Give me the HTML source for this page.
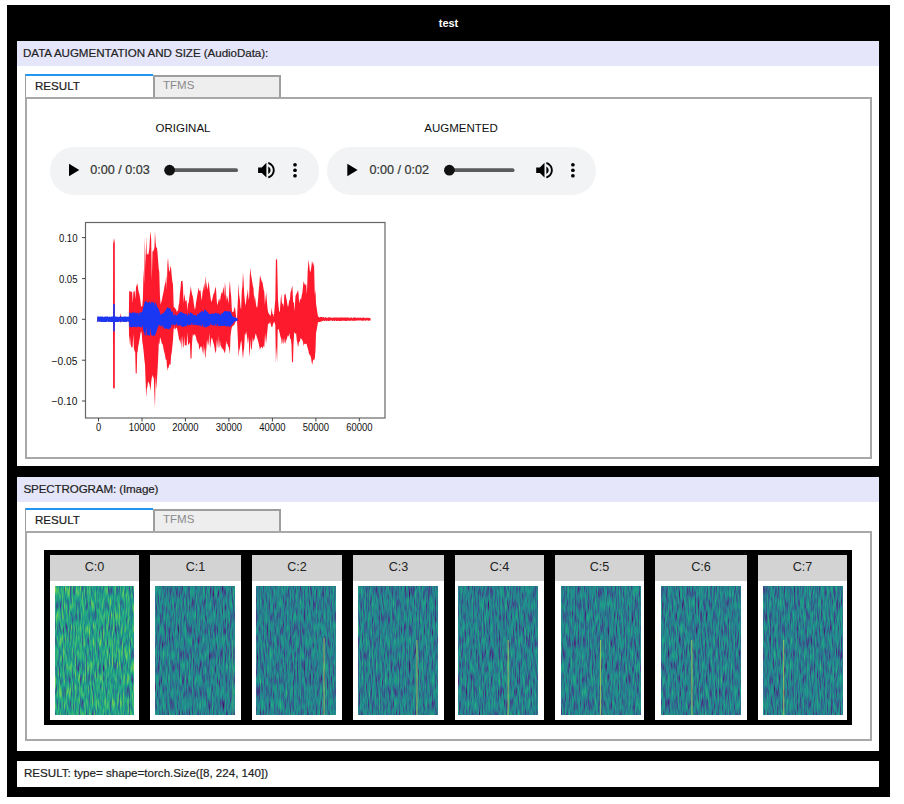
<!DOCTYPE html>
<html><head><meta charset="utf-8">
<style>
html,body{margin:0;padding:0;background:#fff;width:904px;height:804px;overflow:hidden;font-family:"Liberation Sans",sans-serif;}
.a{position:absolute;box-sizing:border-box;}
.hdr,.tab1,.sec,.time{-webkit-text-stroke:0.2px currentColor;}
#outer{left:7px;top:5px;width:883px;height:792px;background:#000;}
#title{left:7px;top:5px;width:883px;height:36px;color:#fff;font-weight:bold;font-size:11px;text-align:center;line-height:37px;}
.sec{background:#fff;left:17px;width:862px;}
.hdr{background:#e6e6fa;left:17px;width:862px;height:25px;font-size:11.6px;letter-spacing:-0.05px;color:#222;line-height:23px;padding-left:6px;}
.tab1{left:25px;width:128px;height:23px;border-top:2px solid #2196f3;border-left:1.5px solid #9e9e9e;background:#fff;font-size:11.6px;color:#1a1a1a;padding-left:9px;line-height:19px;}
.tab2{left:153px;width:128px;height:22px;border:2px solid #9e9e9e;border-bottom:none;background:#eee;font-size:11.5px;color:#8a8a8a;padding-left:8px;line-height:16px;}
.panel{left:25px;width:847px;border:2px solid #a8a8a8;background:#fff;}
.lbl{font-size:11.5px;color:#111;text-align:center;width:268px;}
.pill{height:48px;width:269px;border-radius:24px;background:#f1f3f4;}
.time{font-size:12.6px;color:#333;line-height:15px;}
.cell{background:#fff;}
.chdr{top:555px;height:26px;background:#d3d3d3;font-size:12.6px;color:#222;text-align:center;line-height:25px;}
</style></head><body>
<div class="a" id="outer"></div>
<div class="a" id="title">test</div>

<!-- section 1 -->
<div class="a sec" style="top:41px;height:425px;"></div>
<div class="a hdr" style="top:41px;">DATA AUGMENTATION AND SIZE (AudioData):</div>
<div class="a panel" style="top:97px;height:362px;"></div>
<div class="a tab2" style="top:75px;">TFMS</div>
<div class="a tab1" style="top:74px;">RESULT</div>

<div class="a lbl" style="left:49px;top:122px;">ORIGINAL</div>
<div class="a lbl" style="left:327px;top:122px;">AUGMENTED</div>

<div class="a pill" style="left:50.0px;top:147px;"></div>
<svg class="a" style="left:50.0px;top:147px" width="269" height="48">
<path d="M19.0,16.8 L29.3,23 L19.0,29.2Z" fill="#000"/>
<rect x="119.6" y="21.3" width="68.4" height="3.7" rx="1.85" fill="#5b5b5b"/>
<circle cx="119.6" cy="23.2" r="5.4" fill="#111"/>
<g transform="translate(205.33,12.12) scale(0.922)"><path fill="#000" d="M3 9v6h4l5 5V4L7 9H3zm13.5 3c0-1.770-1.02-3.29-2.5-4.03v8.05c1.48-.73 2.5-2.25 2.5-4.02zM14 3.23v2.06c2.890.86 5 3.54 5 6.71s-2.11 5.85-5 6.71v2.06c4.01-.91 7-4.49 7-8.77s-2.99-7.86-7-8.77z"/></g>
<circle cx="245.00" cy="17.75" r="1.85" fill="#000"/>
<circle cx="245.00" cy="23.25" r="1.85" fill="#000"/>
<circle cx="245.00" cy="28.75" r="1.85" fill="#000"/>
</svg>
<div class="a time" style="left:90.3px;top:163px;">0:00 / 0:03</div>
<div class="a pill" style="left:327.3px;top:147px;"></div>
<svg class="a" style="left:327.3px;top:147px" width="269" height="48">
<path d="M20.3,16.8 L30.6,23 L20.3,29.2Z" fill="#000"/>
<rect x="122.4" y="21.3" width="65.1" height="3.7" rx="1.85" fill="#5b5b5b"/>
<circle cx="122.4" cy="23.2" r="5.4" fill="#111"/>
<g transform="translate(206.43,12.12) scale(0.922)"><path fill="#000" d="M3 9v6h4l5 5V4L7 9H3zm13.5 3c0-1.770-1.02-3.29-2.5-4.03v8.05c1.48-.73 2.5-2.25 2.5-4.02zM14 3.23v2.06c2.890.86 5 3.54 5 6.71s-2.11 5.85-5 6.71v2.06c4.01-.91 7-4.49 7-8.77s-2.99-7.86-7-8.77z"/></g>
<circle cx="245.90" cy="17.75" r="1.85" fill="#000"/>
<circle cx="245.90" cy="23.25" r="1.85" fill="#000"/>
<circle cx="245.90" cy="28.75" r="1.85" fill="#000"/>
</svg>
<div class="a time" style="left:369.5px;top:163px;">0:00 / 0:02</div>

<svg class="a" style="left:0;top:0" width="400" height="440">
<path d="M97.2,317.0 97.8,317.2 98.4,317.2 99.0,317.1 99.6,317.7 100.2,317.8 100.8,318.2 101.5,317.0 102.1,318.0 102.7,317.0 103.3,317.1 103.9,317.2 104.5,317.1 105.1,318.1 105.7,317.0 106.3,317.7 106.9,317.1 107.5,317.2 108.1,318.1 108.7,317.1 109.4,317.1 110.0,317.1 110.6,317.1 111.2,317.1 111.8,317.0 112.4,317.1 113.0,317.0 113.1,238.0 113.9,243.7 114.8,238.0 114.9,317.0 115.5,317.0 116.2,317.8 116.8,317.6 117.5,317.1 118.1,317.1 118.7,317.1 119.4,317.1 120.0,317.0 120.5,312.8 121.0,317.0 121.6,317.0 122.2,317.1 122.8,317.5 123.4,317.0 124.0,317.1 124.6,317.1 125.2,317.8 125.8,318.1 126.4,317.5 127.0,318.0 127.6,317.0 128.2,317.8 128.8,317.0 129.2,291.0 129.8,291.3 130.4,291.3 131.0,292.3 131.6,291.3 132.2,292.9 132.8,303.6 133.4,292.2 134.0,291.0 134.7,291.2 135.3,299.2 136.0,287.3 136.6,285.5 137.3,283.0 137.9,287.3 138.6,291.8 139.2,293.3 139.8,296.5 140.4,300.4 141.1,307.1 141.7,306.0 142.3,306.3 142.9,298.0 143.6,269.0 144.2,284.0 144.8,237.5 145.5,268.9 146.2,236.8 146.8,254.8 147.5,253.7 148.1,254.9 148.7,252.6 149.3,248.4 150.0,237.2 150.6,231.2 151.2,239.8 151.8,280.7 152.5,250.9 153.1,251.8 153.7,249.9 154.4,248.0 155.0,231.2 155.6,242.2 156.2,247.8 156.9,247.2 157.5,252.4 158.1,260.5 158.7,268.4 159.3,272.3 159.9,294.7 160.6,304.7 161.2,302.3 161.8,300.5 162.5,296.5 163.1,294.1 163.7,291.0 164.3,287.6 164.9,284.3 165.6,282.0 166.2,274.8 166.8,290.3 167.4,264.6 168.0,257.4 168.7,267.3 169.3,272.3 170.1,268.9 170.9,265.5 171.6,274.3 172.3,280.9 173.0,284.8 173.7,306.7 174.3,307.2 174.9,307.9 175.5,308.9 176.2,309.3 176.8,312.2 177.4,310.5 178.0,311.0 178.6,305.6 179.2,303.0 179.9,293.4 180.5,288.6 181.1,281.0 181.8,280.9 182.4,280.4 183.0,286.9 183.6,303.5 184.2,293.4 184.8,297.2 185.4,302.0 186.1,299.8 186.7,301.0 187.3,311.1 188.0,302.9 188.6,303.5 189.3,297.8 190.1,292.1 190.8,286.0 191.5,291.6 192.3,294.9 193.0,297.2 193.6,302.0 194.2,306.2 194.8,309.7 195.4,307.8 196.0,303.0 196.7,298.7 197.3,294.9 197.9,292.1 198.5,287.3 199.1,290.6 199.8,290.9 200.4,289.8 201.1,296.1 201.8,300.8 202.5,292.2 203.1,289.9 203.7,286.8 204.4,282.8 205.0,290.8 205.6,275.4 206.2,282.5 206.9,286.4 207.5,289.8 208.7,281.0 209.3,286.9 209.9,292.8 210.6,297.8 211.2,302.2 211.8,300.4 212.5,298.5 213.1,295.6 213.7,293.5 214.3,292.7 215.0,289.0 215.6,286.6 216.2,291.3 216.8,301.5 217.5,305.4 218.1,302.6 218.7,299.7 219.3,298.4 219.9,301.8 220.6,296.9 221.2,293.8 221.8,292.2 222.4,293.7 223.0,289.5 223.7,286.7 224.3,296.7 224.9,282.3 225.5,287.6 226.1,301.5 226.8,294.8 227.4,297.3 228.0,299.7 228.6,303.7 229.3,288.1 229.9,280.4 230.6,291.7 231.2,296.4 231.9,310.7 232.6,312.2 233.4,312.1 234.1,309.2 234.9,306.6 235.6,312.3 236.3,318.0 237.0,318.0 237.8,301.9 238.6,283.5 239.2,295.2 239.9,299.8 240.5,307.2 241.1,309.4 241.8,291.1 242.4,285.9 243.0,272.3 243.6,281.3 244.2,294.1 244.9,301.1 245.5,306.0 246.1,302.2 246.7,296.6 247.3,293.7 247.9,289.0 248.6,299.9 249.2,296.7 249.8,275.3 250.4,268.0 251.0,274.5 251.7,278.5 252.3,282.6 252.9,286.1 253.5,288.2 254.2,300.4 254.8,294.7 255.7,302.3 256.5,307.2 257.3,307.2 258.0,300.2 258.6,291.7 259.3,284.8 260.0,275.4 260.6,277.2 261.2,279.4 261.9,281.7 262.5,282.3 263.7,289.8 264.3,291.9 264.9,304.9 265.6,297.6 266.2,292.2 266.8,300.2 267.5,307.9 268.1,312.2 268.7,313.3 269.4,314.4 270.0,315.2 270.6,315.9 271.8,307.8 272.4,313.9 273.1,314.1 273.7,317.2 274.5,309.0 275.3,300.0 275.9,259.2 276.5,259.4 277.1,259.2 278.0,299.7 278.6,306.6 279.3,312.2 279.9,311.0 280.6,300.5 281.2,293.5 281.8,301.8 282.4,304.6 283.0,303.1 283.7,307.4 284.3,295.1 284.9,294.5 285.5,293.5 286.1,297.5 286.8,300.5 287.4,304.6 288.0,307.2 288.6,304.5 289.2,300.3 289.9,300.0 290.5,292.2 291.1,290.8 291.8,288.1 292.4,285.4 293.1,301.9 293.9,302.6 294.6,310.9 295.5,296.0 296.1,294.8 296.8,293.1 297.4,292.0 298.0,289.8 298.6,293.9 299.2,303.7 299.9,299.8 300.5,298.4 301.1,299.7 301.7,295.6 302.4,292.7 303.0,286.4 303.6,281.0 304.2,283.0 304.9,285.0 305.5,285.1 306.1,283.5 306.9,294.4 307.7,271.0 308.5,259.9 309.1,264.1 309.8,270.7 310.4,272.3 311.2,268.0 312.0,261.1 312.7,263.2 313.3,266.0 314.0,262.0 314.8,294.9 315.5,290.0 316.0,303.6 317.0,310.0 318.0,316.5 318.6,316.7 319.2,316.9 319.8,317.8 320.4,316.8 321.0,317.0 321.6,317.0 322.2,317.2 322.8,317.2 323.4,317.1 324.0,317.2 324.6,317.9 325.2,317.2 325.8,317.3 326.4,317.5 327.0,317.8 327.6,317.9 328.2,317.4 328.8,317.3 329.4,317.3 330.1,317.3 330.7,317.4 331.3,317.9 331.9,317.4 332.5,318.1 333.1,317.3 333.7,317.7 334.3,317.5 334.9,317.4 335.5,317.4 336.1,317.4 336.7,317.4 337.3,317.4 337.9,317.5 338.5,317.7 339.1,317.4 339.7,317.5 340.3,317.5 340.9,317.4 341.6,317.4 342.2,317.4 342.8,317.5 343.4,317.6 344.0,317.5 344.6,317.5 345.2,317.6 345.8,317.6 346.4,317.5 347.0,317.5 347.6,317.6 348.2,317.6 348.8,317.6 349.4,318.3 350.0,317.7 350.6,317.6 351.2,317.5 351.8,317.6 352.4,318.4 353.0,317.6 353.7,317.6 354.3,317.5 354.9,317.6 355.5,317.6 356.1,317.6 356.7,318.3 357.3,317.7 357.9,317.6 358.5,317.7 359.1,317.7 359.7,317.7 360.3,317.6 360.9,317.7 361.5,318.0 362.1,317.7 362.7,317.8 363.3,317.6 363.9,317.6 364.5,317.7 365.2,318.4 365.8,317.7 366.4,317.7 367.0,317.7 367.6,317.7 368.2,318.0 368.8,317.7 369.4,317.8 370.0,318.4 370.6,317.7 370.6,320.7 370.0,320.3 369.4,320.7 368.8,320.7 368.2,320.7 367.6,320.6 367.0,320.1 366.4,320.4 365.8,320.7 365.2,320.7 364.5,320.2 363.9,320.6 363.3,320.7 362.7,320.7 362.1,320.7 361.5,320.7 360.9,320.1 360.3,320.8 359.7,320.2 359.1,320.7 358.5,320.3 357.9,320.8 357.3,320.3 356.7,320.8 356.1,320.6 355.5,320.8 354.9,320.8 354.3,320.8 353.7,320.8 353.0,320.9 352.4,320.8 351.8,320.2 351.2,320.8 350.6,320.8 350.0,320.8 349.4,320.8 348.8,320.9 348.2,320.6 347.6,320.5 347.0,320.9 346.4,320.9 345.8,321.0 345.2,321.0 344.6,320.4 344.0,321.0 343.4,320.4 342.8,321.0 342.2,320.2 341.6,320.9 340.9,320.9 340.3,320.9 339.7,321.0 339.1,321.0 338.5,320.4 337.9,321.0 337.3,321.0 336.7,321.0 336.1,321.0 335.5,320.3 334.9,321.0 334.3,321.0 333.7,320.2 333.1,321.0 332.5,321.1 331.9,321.1 331.3,320.1 330.7,320.3 330.1,321.1 329.4,320.8 328.8,321.1 328.2,321.1 327.6,320.6 327.0,321.1 326.4,321.1 325.8,320.2 325.2,321.1 324.6,320.9 324.0,321.2 323.4,320.2 322.8,321.1 322.2,320.9 321.6,321.5 321.0,321.6 320.4,321.8 319.8,321.9 319.2,322.0 318.6,322.0 318.0,322.2 317.0,328.0 316.0,333.4 315.5,350.0 314.8,358.6 314.2,359.8 313.6,359.4 312.9,360.9 312.3,364.8 311.7,362.6 311.1,358.3 310.4,355.7 309.8,354.5 309.2,354.8 308.6,351.6 308.0,349.1 307.3,346.8 306.7,344.3 306.1,343.6 305.5,343.9 304.9,344.3 304.2,343.5 303.6,346.1 303.0,341.9 302.3,340.2 301.7,338.7 301.1,339.3 300.5,337.8 299.9,342.5 299.2,340.7 298.6,344.5 298.0,347.4 297.4,342.7 296.8,340.8 296.1,333.1 295.5,334.3 294.9,332.4 294.2,332.8 293.5,345.0 293.0,362.3 292.0,362.3 291.5,345.0 290.8,338.3 290.1,339.6 289.4,332.8 288.7,336.8 288.0,334.9 287.4,336.9 286.8,338.7 286.1,340.8 285.5,344.3 284.9,337.8 284.3,342.8 283.6,343.9 283.0,337.7 282.4,342.6 281.8,344.3 281.2,338.4 280.6,337.3 279.9,333.9 279.3,331.4 278.7,328.7 277.7,330.0 277.1,363.6 276.5,346.4 275.9,363.6 275.3,325.0 274.5,322.0 273.7,322.5 273.0,324.3 272.3,327.0 271.5,327.0 270.6,323.7 270.0,321.8 269.3,323.8 268.6,323.7 268.0,324.0 267.0,335.0 266.0,344.0 265.1,333.0 264.3,347.4 263.7,345.5 263.1,347.3 262.5,348.4 261.8,347.1 261.2,346.9 260.6,347.6 260.0,349.9 259.4,346.9 258.8,344.0 258.1,341.0 257.5,338.9 256.9,337.4 256.0,333.7 255.4,334.3 254.8,338.2 254.1,340.0 253.5,341.9 252.9,337.3 252.3,342.2 251.7,350.0 251.0,348.3 250.4,338.3 249.8,357.3 249.2,351.1 248.6,336.0 247.9,344.1 247.3,338.5 246.7,334.6 246.1,331.2 245.5,335.6 244.9,333.3 244.2,347.8 243.6,351.3 243.0,359.2 242.4,352.7 241.7,343.4 241.1,339.9 240.5,343.9 239.8,348.6 239.2,350.6 238.6,357.3 237.8,337.9 237.0,320.5 236.1,320.5 235.5,321.8 234.8,323.4 234.2,325.0 233.4,325.4 232.6,326.1 231.8,327.5 231.2,330.5 230.5,336.3 229.9,354.8 229.3,349.7 228.7,347.2 228.0,345.9 227.4,343.6 226.8,344.5 226.2,340.6 225.5,349.7 224.9,353.6 224.3,351.7 223.7,350.5 223.0,348.9 222.4,348.5 221.8,348.6 221.2,346.3 220.6,345.9 219.9,339.4 219.3,347.4 218.7,347.4 218.1,335.8 217.5,348.4 216.8,339.3 216.2,350.2 215.6,353.6 215.0,350.5 214.3,346.4 213.7,343.7 213.1,342.1 212.4,339.1 211.8,337.4 211.2,339.5 210.6,344.8 210.0,348.6 209.3,332.6 208.7,342.4 208.1,345.6 207.5,339.1 206.8,351.9 206.2,340.1 205.6,358.6 205.0,356.1 204.4,346.5 203.7,355.3 203.1,343.9 202.5,353.6 201.8,347.8 201.0,346.1 200.4,347.1 199.8,348.2 199.2,349.9 198.6,343.5 197.9,343.6 197.3,341.4 196.7,340.6 196.1,337.4 195.4,335.4 194.8,333.7 194.2,335.2 193.6,335.8 192.9,333.8 192.3,339.9 192.0,344.0 191.5,358.6 190.5,358.6 190.0,344.0 189.3,342.6 188.6,344.9 188.0,344.3 187.3,332.3 186.7,344.8 186.1,346.1 185.5,344.9 184.8,345.4 184.2,336.3 183.6,346.4 183.0,347.9 182.3,335.6 181.7,349.9 181.1,336.6 180.4,344.1 179.8,340.7 179.2,339.9 178.4,335.5 177.6,331.1 176.8,327.5 176.2,327.9 175.5,328.8 174.9,330.0 174.3,326.8 173.6,329.4 173.0,339.9 172.4,345.9 171.8,351.9 171.1,355.8 170.5,364.8 169.8,364.7 169.2,364.3 168.5,368.5 167.9,367.0 167.2,371.0 166.5,359.6 165.8,359.9 165.1,355.8 164.4,352.4 163.7,349.9 163.1,346.2 162.5,343.9 161.8,343.4 161.2,341.0 160.6,338.5 160.0,337.4 159.4,344.6 158.8,342.8 158.1,359.4 157.5,371.0 156.9,380.3 156.2,389.6 155.6,375.0 155.0,408.4 154.4,394.0 153.8,376.3 153.1,378.5 152.5,374.8 151.9,377.1 151.2,382.0 150.6,391.0 150.0,386.8 149.3,383.8 148.7,382.2 148.1,381.6 147.4,386.8 146.8,389.0 146.2,397.2 145.0,364.8 144.3,359.1 143.7,352.2 143.0,345.8 142.3,341.7 141.7,333.1 141.0,331.2 140.3,334.5 139.6,339.2 138.9,343.2 138.2,346.5 137.5,352.4 137.2,352.0 136.7,373.5 135.7,373.5 135.2,352.0 134.6,350.9 133.9,348.6 133.3,333.8 132.6,346.5 132.0,348.0 131.3,346.8 130.6,344.3 129.9,335.5 129.2,344.9 128.8,321.6 128.2,321.6 127.6,320.8 127.0,321.5 126.4,321.6 125.8,321.5 125.2,321.4 124.6,321.5 124.0,320.3 123.4,321.5 122.8,321.5 122.2,321.4 121.6,321.3 121.0,321.6 120.5,323.0 120.0,321.6 119.4,321.5 118.7,321.6 118.1,321.6 117.5,320.7 116.8,320.4 116.2,321.3 115.5,320.7 114.9,321.6 114.8,388.5 113.9,388.2 113.1,388.5 113.0,321.6 112.4,321.5 111.8,321.5 111.2,321.6 110.6,321.6 110.0,321.5 109.4,321.5 108.7,321.5 108.1,321.6 107.5,321.5 106.9,321.5 106.3,321.4 105.7,321.6 105.1,321.5 104.5,321.5 103.9,321.4 103.3,321.5 102.7,321.5 102.1,321.5 101.5,321.5 100.8,321.5 100.2,321.4 99.6,321.5 99.0,321.5 98.4,320.4 97.8,321.5 97.2,321.6Z" fill="#fd1a2c"/>
<path d="M97.2,316.5 97.8,316.6 98.4,316.6 99.0,316.6 99.6,316.7 100.3,316.5 100.9,316.6 101.5,316.6 102.1,316.6 102.7,316.6 103.3,317.5 103.9,316.6 104.5,316.7 105.2,316.6 105.8,316.6 106.4,316.5 107.0,316.6 107.6,316.6 108.2,316.5 108.8,317.4 109.4,316.5 110.0,316.6 110.7,317.3 111.3,316.6 111.9,316.6 112.5,316.6 113.1,316.5 113.2,304.0 114.0,304.1 114.8,304.0 114.9,316.5 115.5,316.6 116.1,316.6 116.7,316.8 117.4,316.7 118.0,316.6 118.6,317.5 119.2,316.6 119.8,316.7 120.4,316.6 121.0,316.6 121.6,316.5 122.3,316.7 122.9,317.1 123.5,316.6 124.1,316.6 124.7,316.5 125.3,316.6 125.9,316.5 126.5,316.7 127.2,316.7 127.8,316.6 128.4,316.7 129.0,316.5 129.5,312.2 130.1,312.6 130.8,312.7 131.4,313.8 132.0,312.6 132.6,312.5 133.2,312.4 133.9,312.6 134.5,312.3 135.1,313.5 135.8,312.3 136.4,313.4 137.0,312.8 137.6,313.1 138.2,312.6 138.9,315.6 139.5,312.3 140.1,312.7 140.8,312.3 141.4,312.3 142.0,312.2 142.6,310.1 143.2,307.8 143.8,305.7 144.4,303.6 145.0,301.0 145.6,301.4 146.2,301.2 146.9,302.2 147.5,302.4 148.1,302.6 148.8,302.5 149.4,302.0 150.0,301.5 150.6,304.4 151.2,302.0 151.9,301.6 152.5,302.3 153.1,302.8 153.8,302.0 154.4,306.5 155.0,301.6 155.6,302.9 156.3,304.1 156.9,305.9 157.5,307.6 158.2,308.2 158.8,309.1 159.7,312.0 160.6,314.7 161.2,314.4 161.9,313.9 162.5,313.6 163.1,313.1 163.8,312.8 164.4,311.9 165.1,311.1 165.8,310.1 166.5,308.4 167.2,307.2 167.9,307.6 168.6,308.3 169.3,308.3 170.0,308.2 170.7,309.3 171.4,312.1 172.2,311.3 172.9,311.9 173.5,315.3 174.1,316.0 174.8,314.0 175.4,314.5 176.0,315.2 176.6,315.7 177.2,315.1 177.9,314.4 178.5,313.9 179.1,313.1 179.8,312.6 180.4,311.4 181.1,312.3 181.7,312.1 182.4,312.8 183.1,312.9 183.8,313.5 184.4,313.7 185.1,313.8 185.7,313.9 186.3,313.5 187.0,315.1 187.6,316.2 188.2,313.2 188.8,313.2 189.5,315.2 190.1,312.6 190.7,312.4 191.3,313.1 192.0,313.6 192.6,313.9 193.2,314.4 193.9,315.5 194.5,314.7 195.2,315.0 195.8,315.0 196.5,316.8 197.2,314.0 197.9,313.8 198.5,314.4 199.2,312.9 199.8,312.6 200.4,312.6 201.1,311.8 201.7,311.3 202.3,310.8 202.9,311.1 203.6,312.4 204.2,310.2 204.8,309.1 205.5,310.0 206.1,310.5 206.8,311.7 207.5,312.0 208.2,312.6 208.8,314.3 209.5,313.8 210.2,313.9 210.8,313.9 211.5,313.6 212.1,313.5 212.8,313.7 213.5,313.9 214.1,313.3 214.8,313.3 215.4,313.1 216.1,312.9 216.8,313.4 217.4,313.2 218.1,313.4 218.8,313.5 219.5,313.9 220.1,316.1 220.8,313.8 221.4,313.5 222.0,312.9 222.7,313.6 223.3,312.0 223.9,311.9 224.5,311.0 225.1,311.1 225.8,311.1 226.4,311.6 227.0,311.1 227.7,311.2 228.3,311.5 228.9,311.2 229.6,311.5 230.2,311.0 230.9,312.5 231.6,314.0 232.3,316.0 233.0,316.6 233.7,317.0 234.3,317.2 235.0,317.5 235.7,317.7 236.4,318.0 237.0,318.3 237.7,318.5 237.7,320.4 237.1,320.6 236.5,321.0 235.8,321.2 235.2,321.5 234.6,321.2 234.0,322.3 233.4,322.9 232.7,323.7 232.1,324.6 231.5,325.1 230.8,326.0 230.2,327.0 229.5,326.5 228.9,326.5 228.2,326.3 227.6,326.5 226.9,326.2 226.2,326.4 225.6,326.1 224.9,325.7 224.3,325.6 223.6,326.0 222.9,325.9 222.3,325.8 221.6,326.0 221.0,325.9 220.3,326.2 219.6,326.1 219.0,326.0 218.3,326.3 217.7,323.2 217.0,326.5 216.4,326.2 215.8,323.6 215.1,325.7 214.5,325.4 213.9,325.6 213.3,325.6 212.6,325.2 212.0,324.9 211.4,325.1 210.7,323.0 210.1,325.4 209.4,325.7 208.8,325.8 208.1,326.2 207.4,326.5 206.8,326.9 206.1,327.1 205.5,327.4 204.8,327.9 204.2,325.1 203.6,327.0 203.0,326.9 202.4,323.3 201.8,326.4 201.2,326.4 200.6,326.2 200.0,324.3 199.4,325.9 198.8,325.5 198.2,325.4 197.6,325.1 197.0,325.3 196.4,325.1 195.8,324.8 195.1,324.8 194.5,324.7 193.9,325.0 193.2,324.9 192.6,325.0 192.0,322.3 191.3,324.9 190.7,325.1 190.1,324.8 189.4,325.1 188.8,325.3 188.2,325.7 187.6,323.8 186.9,326.0 186.3,326.2 185.7,326.4 185.1,326.1 184.4,326.3 183.8,326.8 183.2,327.0 182.6,326.5 181.9,326.3 181.3,326.5 180.7,325.9 180.0,324.2 179.4,326.0 178.8,325.8 178.2,325.4 177.5,325.3 176.9,325.3 176.3,322.4 175.7,325.3 175.0,324.9 174.4,325.0 173.8,325.1 173.1,324.0 172.5,326.0 171.8,323.2 171.1,327.7 170.4,327.8 169.8,328.5 169.1,329.8 168.4,328.8 167.8,329.1 167.1,329.0 166.4,327.7 165.7,328.9 165.1,328.7 164.4,328.8 163.8,328.3 163.2,326.0 162.5,327.2 161.9,324.7 161.3,326.5 160.7,325.9 160.0,325.8 159.4,325.1 158.8,325.1 158.2,326.7 157.5,328.1 156.9,330.6 156.3,331.9 155.6,333.4 155.0,336.4 154.4,335.6 153.8,335.1 153.1,335.8 152.5,336.0 151.9,335.3 151.2,335.6 150.6,327.6 150.0,335.2 149.4,336.0 148.8,335.1 148.1,335.2 147.5,335.5 146.9,335.6 146.2,326.9 145.6,335.3 145.0,336.2 144.4,333.3 143.8,332.0 143.2,330.1 142.6,325.1 142.0,327.5 141.4,327.5 140.8,327.5 140.1,327.0 139.5,327.0 138.9,327.0 138.2,326.3 137.6,326.6 137.0,327.4 136.4,327.2 135.8,327.1 135.1,327.0 134.5,327.1 133.9,326.2 133.2,327.2 132.6,326.9 132.0,326.9 131.4,327.2 130.8,327.1 130.1,327.3 129.5,327.5 129.0,322.1 128.4,321.7 127.8,321.1 127.2,322.1 126.5,322.1 125.9,321.7 125.3,321.9 124.7,321.9 124.1,321.9 123.5,321.9 122.9,321.9 122.3,321.0 121.6,322.0 121.0,321.9 120.4,322.1 119.8,320.7 119.2,322.1 118.6,322.0 118.0,321.9 117.4,322.1 116.7,322.0 116.1,321.9 115.5,322.1 114.9,322.1 114.8,331.8 114.0,331.0 113.2,331.8 113.1,322.1 112.5,322.0 111.9,322.1 111.3,322.0 110.7,321.8 110.0,322.0 109.4,321.9 108.8,322.1 108.2,322.1 107.6,320.6 107.0,321.9 106.4,321.9 105.8,322.1 105.2,322.0 104.5,322.0 103.9,321.9 103.3,322.0 102.7,321.8 102.1,321.9 101.5,322.0 100.9,321.9 100.3,321.4 99.6,322.0 99.0,320.6 98.4,322.0 97.8,322.0 97.2,322.1Z" fill="#1a37f4"/>
<rect x="85.5" y="222.5" width="299.5" height="195.5" fill="none" stroke="#666" stroke-width="1.2"/>
<line x1="82" y1="237.6" x2="85.5" y2="237.6" stroke="#444" stroke-width="1"/>
<text x="77.5" y="242.0" font-size="10" text-anchor="end" textLength="18.6" lengthAdjust="spacingAndGlyphs" fill="#111">0.10</text>
<line x1="82" y1="278.6" x2="85.5" y2="278.6" stroke="#444" stroke-width="1"/>
<text x="77.5" y="283.0" font-size="10" text-anchor="end" textLength="18.6" lengthAdjust="spacingAndGlyphs" fill="#111">0.05</text>
<line x1="82" y1="319.3" x2="85.5" y2="319.3" stroke="#444" stroke-width="1"/>
<text x="77.5" y="323.7" font-size="10" text-anchor="end" textLength="18.6" lengthAdjust="spacingAndGlyphs" fill="#111">0.00</text>
<line x1="82" y1="360.2" x2="85.5" y2="360.2" stroke="#444" stroke-width="1"/>
<text x="77.5" y="364.6" font-size="10" text-anchor="end" textLength="25.9" lengthAdjust="spacingAndGlyphs" fill="#111">−0.05</text>
<line x1="82" y1="401.0" x2="85.5" y2="401.0" stroke="#444" stroke-width="1"/>
<text x="77.5" y="405.4" font-size="10" text-anchor="end" textLength="25.9" lengthAdjust="spacingAndGlyphs" fill="#111">−0.10</text>
<line x1="98.5" y1="418" x2="98.5" y2="421.5" stroke="#444" stroke-width="1"/>
<text x="98.5" y="430.9" font-size="10" text-anchor="middle" textLength="5.2" lengthAdjust="spacingAndGlyphs" fill="#111">0</text>
<line x1="142.0" y1="418" x2="142.0" y2="421.5" stroke="#444" stroke-width="1"/>
<text x="142.0" y="430.9" font-size="10" text-anchor="middle" textLength="26.3" lengthAdjust="spacingAndGlyphs" fill="#111">10000</text>
<line x1="185.4" y1="418" x2="185.4" y2="421.5" stroke="#444" stroke-width="1"/>
<text x="185.4" y="430.9" font-size="10" text-anchor="middle" textLength="26.3" lengthAdjust="spacingAndGlyphs" fill="#111">20000</text>
<line x1="228.9" y1="418" x2="228.9" y2="421.5" stroke="#444" stroke-width="1"/>
<text x="228.9" y="430.9" font-size="10" text-anchor="middle" textLength="26.3" lengthAdjust="spacingAndGlyphs" fill="#111">30000</text>
<line x1="272.4" y1="418" x2="272.4" y2="421.5" stroke="#444" stroke-width="1"/>
<text x="272.4" y="430.9" font-size="10" text-anchor="middle" textLength="26.3" lengthAdjust="spacingAndGlyphs" fill="#111">40000</text>
<line x1="315.9" y1="418" x2="315.9" y2="421.5" stroke="#444" stroke-width="1"/>
<text x="315.9" y="430.9" font-size="10" text-anchor="middle" textLength="26.3" lengthAdjust="spacingAndGlyphs" fill="#111">50000</text>
<line x1="359.3" y1="418" x2="359.3" y2="421.5" stroke="#444" stroke-width="1"/>
<text x="359.3" y="430.9" font-size="10" text-anchor="middle" textLength="26.3" lengthAdjust="spacingAndGlyphs" fill="#111">60000</text>
</svg>

<!-- section 2 -->
<div class="a sec" style="top:477px;height:274px;"></div>
<div class="a hdr" style="top:477px;padding-left:6.5px;letter-spacing:-0.12px;">SPECTROGRAM: (Image)</div>
<div class="a panel" style="top:531px;height:210px;"></div>
<div class="a tab2" style="top:509px;">TFMS</div>
<div class="a tab1" style="top:508px;">RESULT</div>

<div class="a" style="left:44px;top:550px;width:808px;height:175px;background:#000;"></div>
<svg width="0" height="0" style="position:absolute"><defs>
<filter id="sp0" x="0" y="0" width="1" height="1" color-interpolation-filters="sRGB"><feTurbulence type="fractalNoise" baseFrequency="0.7 0.08" numOctaves="2" seed="5"/><feColorMatrix type="matrix" values="1 0 0 0 0  1 0 0 0 0  1 0 0 0 0  0 0 0 0 1"/><feComponentTransfer><feFuncR type="table" tableValues="0.267 0.267 0.271 0.276 0.281 0.277 0.268 0.260 0.249 0.234 0.220 0.205 0.192 0.178 0.165 0.154 0.143 0.132 0.130 0.132 0.133 0.135 0.157 0.179 0.201 0.224 0.246 0.268 0.303 0.338 0.373 0.408 0.443 0.478 0.522 0.565 0.608 0.652 0.695 0.739 0.780"/><feFuncG type="table" tableValues="0.004 0.004 0.041 0.084 0.126 0.166 0.205 0.244 0.281 0.313 0.346 0.379 0.409 0.439 0.470 0.500 0.530 0.561 0.589 0.617 0.645 0.660 0.675 0.690 0.705 0.720 0.735 0.750 0.761 0.773 0.785 0.796 0.808 0.820 0.829 0.838 0.847 0.856 0.865 0.874 0.879"/><feFuncB type="table" tableValues="0.329 0.329 0.365 0.405 0.445 0.473 0.495 0.517 0.532 0.540 0.547 0.553 0.554 0.556 0.557 0.555 0.552 0.550 0.542 0.532 0.522 0.516 0.503 0.491 0.478 0.465 0.452 0.438 0.418 0.398 0.378 0.358 0.338 0.318 0.290 0.262 0.234 0.206 0.178 0.151 0.148"/></feComponentTransfer></filter>
<filter id="sp1" x="0" y="0" width="1" height="1" color-interpolation-filters="sRGB"><feTurbulence type="fractalNoise" baseFrequency="0.7 0.08" numOctaves="2" seed="18"/><feColorMatrix type="matrix" values="1 0 0 0 0  1 0 0 0 0  1 0 0 0 0  0 0 0 0 1"/><feComponentTransfer><feFuncR type="table" tableValues="0.267 0.267 0.267 0.267 0.271 0.275 0.279 0.281 0.274 0.267 0.260 0.251 0.239 0.227 0.215 0.203 0.192 0.181 0.170 0.160 0.151 0.145 0.140 0.135 0.130 0.130 0.130 0.131 0.132 0.132 0.133 0.133 0.151 0.171 0.190 0.209 0.229 0.248 0.267 0.298 0.329"/><feFuncG type="table" tableValues="0.004 0.004 0.004 0.005 0.041 0.076 0.112 0.147 0.179 0.211 0.244 0.275 0.302 0.329 0.357 0.383 0.409 0.434 0.459 0.484 0.510 0.524 0.538 0.552 0.567 0.580 0.593 0.606 0.619 0.632 0.645 0.658 0.671 0.684 0.697 0.710 0.723 0.736 0.749 0.759 0.770"/><feFuncB type="table" tableValues="0.329 0.329 0.329 0.331 0.364 0.397 0.431 0.462 0.480 0.498 0.517 0.531 0.537 0.543 0.549 0.553 0.554 0.555 0.556 0.556 0.554 0.553 0.551 0.550 0.549 0.545 0.541 0.536 0.532 0.527 0.522 0.518 0.507 0.496 0.484 0.473 0.462 0.450 0.439 0.421 0.404"/></feComponentTransfer></filter>
<filter id="sp2" x="0" y="0" width="1" height="1" color-interpolation-filters="sRGB"><feTurbulence type="fractalNoise" baseFrequency="0.7 0.08" numOctaves="2" seed="31"/><feColorMatrix type="matrix" values="1 0 0 0 0  1 0 0 0 0  1 0 0 0 0  0 0 0 0 1"/><feComponentTransfer><feFuncR type="table" tableValues="0.267 0.267 0.267 0.267 0.271 0.275 0.279 0.281 0.274 0.267 0.260 0.251 0.239 0.227 0.215 0.203 0.192 0.181 0.170 0.160 0.151 0.145 0.140 0.135 0.130 0.130 0.130 0.131 0.132 0.132 0.133 0.133 0.151 0.171 0.190 0.209 0.229 0.248 0.267 0.298 0.329"/><feFuncG type="table" tableValues="0.004 0.004 0.004 0.005 0.041 0.076 0.112 0.147 0.179 0.211 0.244 0.275 0.302 0.329 0.357 0.383 0.409 0.434 0.459 0.484 0.510 0.524 0.538 0.552 0.567 0.580 0.593 0.606 0.619 0.632 0.645 0.658 0.671 0.684 0.697 0.710 0.723 0.736 0.749 0.759 0.770"/><feFuncB type="table" tableValues="0.329 0.329 0.329 0.331 0.364 0.397 0.431 0.462 0.480 0.498 0.517 0.531 0.537 0.543 0.549 0.553 0.554 0.555 0.556 0.556 0.554 0.553 0.551 0.550 0.549 0.545 0.541 0.536 0.532 0.527 0.522 0.518 0.507 0.496 0.484 0.473 0.462 0.450 0.439 0.421 0.404"/></feComponentTransfer></filter>
<filter id="sp3" x="0" y="0" width="1" height="1" color-interpolation-filters="sRGB"><feTurbulence type="fractalNoise" baseFrequency="0.7 0.08" numOctaves="2" seed="44"/><feColorMatrix type="matrix" values="1 0 0 0 0  1 0 0 0 0  1 0 0 0 0  0 0 0 0 1"/><feComponentTransfer><feFuncR type="table" tableValues="0.267 0.267 0.267 0.267 0.271 0.275 0.279 0.281 0.274 0.267 0.260 0.251 0.239 0.227 0.215 0.203 0.192 0.181 0.170 0.160 0.151 0.145 0.140 0.135 0.130 0.130 0.130 0.131 0.132 0.132 0.133 0.133 0.151 0.171 0.190 0.209 0.229 0.248 0.267 0.298 0.329"/><feFuncG type="table" tableValues="0.004 0.004 0.004 0.005 0.041 0.076 0.112 0.147 0.179 0.211 0.244 0.275 0.302 0.329 0.357 0.383 0.409 0.434 0.459 0.484 0.510 0.524 0.538 0.552 0.567 0.580 0.593 0.606 0.619 0.632 0.645 0.658 0.671 0.684 0.697 0.710 0.723 0.736 0.749 0.759 0.770"/><feFuncB type="table" tableValues="0.329 0.329 0.329 0.331 0.364 0.397 0.431 0.462 0.480 0.498 0.517 0.531 0.537 0.543 0.549 0.553 0.554 0.555 0.556 0.556 0.554 0.553 0.551 0.550 0.549 0.545 0.541 0.536 0.532 0.527 0.522 0.518 0.507 0.496 0.484 0.473 0.462 0.450 0.439 0.421 0.404"/></feComponentTransfer></filter>
<filter id="sp4" x="0" y="0" width="1" height="1" color-interpolation-filters="sRGB"><feTurbulence type="fractalNoise" baseFrequency="0.7 0.08" numOctaves="2" seed="57"/><feColorMatrix type="matrix" values="1 0 0 0 0  1 0 0 0 0  1 0 0 0 0  0 0 0 0 1"/><feComponentTransfer><feFuncR type="table" tableValues="0.267 0.267 0.267 0.267 0.271 0.275 0.279 0.281 0.274 0.267 0.260 0.251 0.239 0.227 0.215 0.203 0.192 0.181 0.170 0.160 0.151 0.145 0.140 0.135 0.130 0.130 0.130 0.131 0.132 0.132 0.133 0.133 0.151 0.171 0.190 0.209 0.229 0.248 0.267 0.298 0.329"/><feFuncG type="table" tableValues="0.004 0.004 0.004 0.005 0.041 0.076 0.112 0.147 0.179 0.211 0.244 0.275 0.302 0.329 0.357 0.383 0.409 0.434 0.459 0.484 0.510 0.524 0.538 0.552 0.567 0.580 0.593 0.606 0.619 0.632 0.645 0.658 0.671 0.684 0.697 0.710 0.723 0.736 0.749 0.759 0.770"/><feFuncB type="table" tableValues="0.329 0.329 0.329 0.331 0.364 0.397 0.431 0.462 0.480 0.498 0.517 0.531 0.537 0.543 0.549 0.553 0.554 0.555 0.556 0.556 0.554 0.553 0.551 0.550 0.549 0.545 0.541 0.536 0.532 0.527 0.522 0.518 0.507 0.496 0.484 0.473 0.462 0.450 0.439 0.421 0.404"/></feComponentTransfer></filter>
<filter id="sp5" x="0" y="0" width="1" height="1" color-interpolation-filters="sRGB"><feTurbulence type="fractalNoise" baseFrequency="0.7 0.08" numOctaves="2" seed="70"/><feColorMatrix type="matrix" values="1 0 0 0 0  1 0 0 0 0  1 0 0 0 0  0 0 0 0 1"/><feComponentTransfer><feFuncR type="table" tableValues="0.267 0.267 0.267 0.267 0.271 0.275 0.279 0.281 0.274 0.267 0.260 0.251 0.239 0.227 0.215 0.203 0.192 0.181 0.170 0.160 0.151 0.145 0.140 0.135 0.130 0.130 0.130 0.131 0.132 0.132 0.133 0.133 0.151 0.171 0.190 0.209 0.229 0.248 0.267 0.298 0.329"/><feFuncG type="table" tableValues="0.004 0.004 0.004 0.005 0.041 0.076 0.112 0.147 0.179 0.211 0.244 0.275 0.302 0.329 0.357 0.383 0.409 0.434 0.459 0.484 0.510 0.524 0.538 0.552 0.567 0.580 0.593 0.606 0.619 0.632 0.645 0.658 0.671 0.684 0.697 0.710 0.723 0.736 0.749 0.759 0.770"/><feFuncB type="table" tableValues="0.329 0.329 0.329 0.331 0.364 0.397 0.431 0.462 0.480 0.498 0.517 0.531 0.537 0.543 0.549 0.553 0.554 0.555 0.556 0.556 0.554 0.553 0.551 0.550 0.549 0.545 0.541 0.536 0.532 0.527 0.522 0.518 0.507 0.496 0.484 0.473 0.462 0.450 0.439 0.421 0.404"/></feComponentTransfer></filter>
<filter id="sp6" x="0" y="0" width="1" height="1" color-interpolation-filters="sRGB"><feTurbulence type="fractalNoise" baseFrequency="0.7 0.08" numOctaves="2" seed="83"/><feColorMatrix type="matrix" values="1 0 0 0 0  1 0 0 0 0  1 0 0 0 0  0 0 0 0 1"/><feComponentTransfer><feFuncR type="table" tableValues="0.267 0.267 0.267 0.267 0.271 0.275 0.279 0.281 0.274 0.267 0.260 0.251 0.239 0.227 0.215 0.203 0.192 0.181 0.170 0.160 0.151 0.145 0.140 0.135 0.130 0.130 0.130 0.131 0.132 0.132 0.133 0.133 0.151 0.171 0.190 0.209 0.229 0.248 0.267 0.298 0.329"/><feFuncG type="table" tableValues="0.004 0.004 0.004 0.005 0.041 0.076 0.112 0.147 0.179 0.211 0.244 0.275 0.302 0.329 0.357 0.383 0.409 0.434 0.459 0.484 0.510 0.524 0.538 0.552 0.567 0.580 0.593 0.606 0.619 0.632 0.645 0.658 0.671 0.684 0.697 0.710 0.723 0.736 0.749 0.759 0.770"/><feFuncB type="table" tableValues="0.329 0.329 0.329 0.331 0.364 0.397 0.431 0.462 0.480 0.498 0.517 0.531 0.537 0.543 0.549 0.553 0.554 0.555 0.556 0.556 0.554 0.553 0.551 0.550 0.549 0.545 0.541 0.536 0.532 0.527 0.522 0.518 0.507 0.496 0.484 0.473 0.462 0.450 0.439 0.421 0.404"/></feComponentTransfer></filter>
<filter id="sp7" x="0" y="0" width="1" height="1" color-interpolation-filters="sRGB"><feTurbulence type="fractalNoise" baseFrequency="0.7 0.08" numOctaves="2" seed="96"/><feColorMatrix type="matrix" values="1 0 0 0 0  1 0 0 0 0  1 0 0 0 0  0 0 0 0 1"/><feComponentTransfer><feFuncR type="table" tableValues="0.267 0.267 0.267 0.267 0.271 0.275 0.279 0.281 0.274 0.267 0.260 0.251 0.239 0.227 0.215 0.203 0.192 0.181 0.170 0.160 0.151 0.145 0.140 0.135 0.130 0.130 0.130 0.131 0.132 0.132 0.133 0.133 0.151 0.171 0.190 0.209 0.229 0.248 0.267 0.298 0.329"/><feFuncG type="table" tableValues="0.004 0.004 0.004 0.005 0.041 0.076 0.112 0.147 0.179 0.211 0.244 0.275 0.302 0.329 0.357 0.383 0.409 0.434 0.459 0.484 0.510 0.524 0.538 0.552 0.567 0.580 0.593 0.606 0.619 0.632 0.645 0.658 0.671 0.684 0.697 0.710 0.723 0.736 0.749 0.759 0.770"/><feFuncB type="table" tableValues="0.329 0.329 0.329 0.331 0.364 0.397 0.431 0.462 0.480 0.498 0.517 0.531 0.537 0.543 0.549 0.553 0.554 0.555 0.556 0.556 0.554 0.553 0.551 0.550 0.549 0.545 0.541 0.536 0.532 0.527 0.522 0.518 0.507 0.496 0.484 0.473 0.462 0.450 0.439 0.421 0.404"/></feComponentTransfer></filter>
</defs></svg>
<div class="a cell" style="left:50px;top:555px;width:89px;height:165px;"></div>
<div class="a chdr" style="left:50px;width:89px;">C:0</div>
<svg class="a" style="left:55px;top:586px" width="79" height="129"><rect width="79" height="129" filter="url(#sp0)"/></svg>
<div class="a cell" style="left:150px;top:555px;width:91px;height:165px;"></div>
<div class="a chdr" style="left:150px;width:91px;">C:1</div>
<svg class="a" style="left:155px;top:586px" width="80" height="129"><rect width="80" height="129" filter="url(#sp1)"/><rect x="77.2" y="54" width="1.1" height="75" fill="#60b878" opacity="0.50"/></svg>
<div class="a cell" style="left:252px;top:555px;width:90px;height:165px;"></div>
<div class="a chdr" style="left:252px;width:90px;">C:2</div>
<svg class="a" style="left:256px;top:586px" width="80" height="129"><rect width="80" height="129" filter="url(#sp2)"/><rect x="67.5" y="52" width="1.1" height="77" fill="#c8dc4a" opacity="0.65"/></svg>
<div class="a cell" style="left:353px;top:555px;width:91px;height:165px;"></div>
<div class="a chdr" style="left:353px;width:91px;">C:3</div>
<svg class="a" style="left:358px;top:586px" width="80" height="129"><rect width="80" height="129" filter="url(#sp3)"/><rect x="58.4" y="54" width="1.1" height="75" fill="#c8dc4a" opacity="0.65"/></svg>
<div class="a cell" style="left:455px;top:555px;width:89px;height:165px;"></div>
<div class="a chdr" style="left:455px;width:89px;">C:4</div>
<svg class="a" style="left:458px;top:586px" width="80" height="129"><rect width="80" height="129" filter="url(#sp4)"/><rect x="49.6" y="54" width="1.1" height="75" fill="#c8dc4a" opacity="0.65"/></svg>
<div class="a cell" style="left:555px;top:555px;width:89px;height:165px;"></div>
<div class="a chdr" style="left:555px;width:89px;">C:5</div>
<svg class="a" style="left:561px;top:586px" width="80" height="129"><rect width="80" height="129" filter="url(#sp5)"/><rect x="39.0" y="54" width="1.1" height="75" fill="#c8dc4a" opacity="0.65"/></svg>
<div class="a cell" style="left:655px;top:555px;width:92px;height:165px;"></div>
<div class="a chdr" style="left:655px;width:92px;">C:6</div>
<svg class="a" style="left:661px;top:586px" width="80" height="129"><rect width="80" height="129" filter="url(#sp6)"/><rect x="30.3" y="54" width="1.1" height="75" fill="#c8dc4a" opacity="0.65"/></svg>
<div class="a cell" style="left:758px;top:555px;width:89px;height:165px;"></div>
<div class="a chdr" style="left:758px;width:89px;">C:7</div>
<svg class="a" style="left:763px;top:586px" width="80" height="129"><rect width="80" height="129" filter="url(#sp7)"/><rect x="20.1" y="54" width="1.1" height="75" fill="#c8dc4a" opacity="0.65"/></svg>

<!-- section 3 -->
<div class="a sec" style="top:761px;height:26px;font-size:11.6px;letter-spacing:0px;color:#222;line-height:24px;padding-left:7px;">RESULT: type= shape=torch.Size([8, 224, 140])</div>
</body></html>
